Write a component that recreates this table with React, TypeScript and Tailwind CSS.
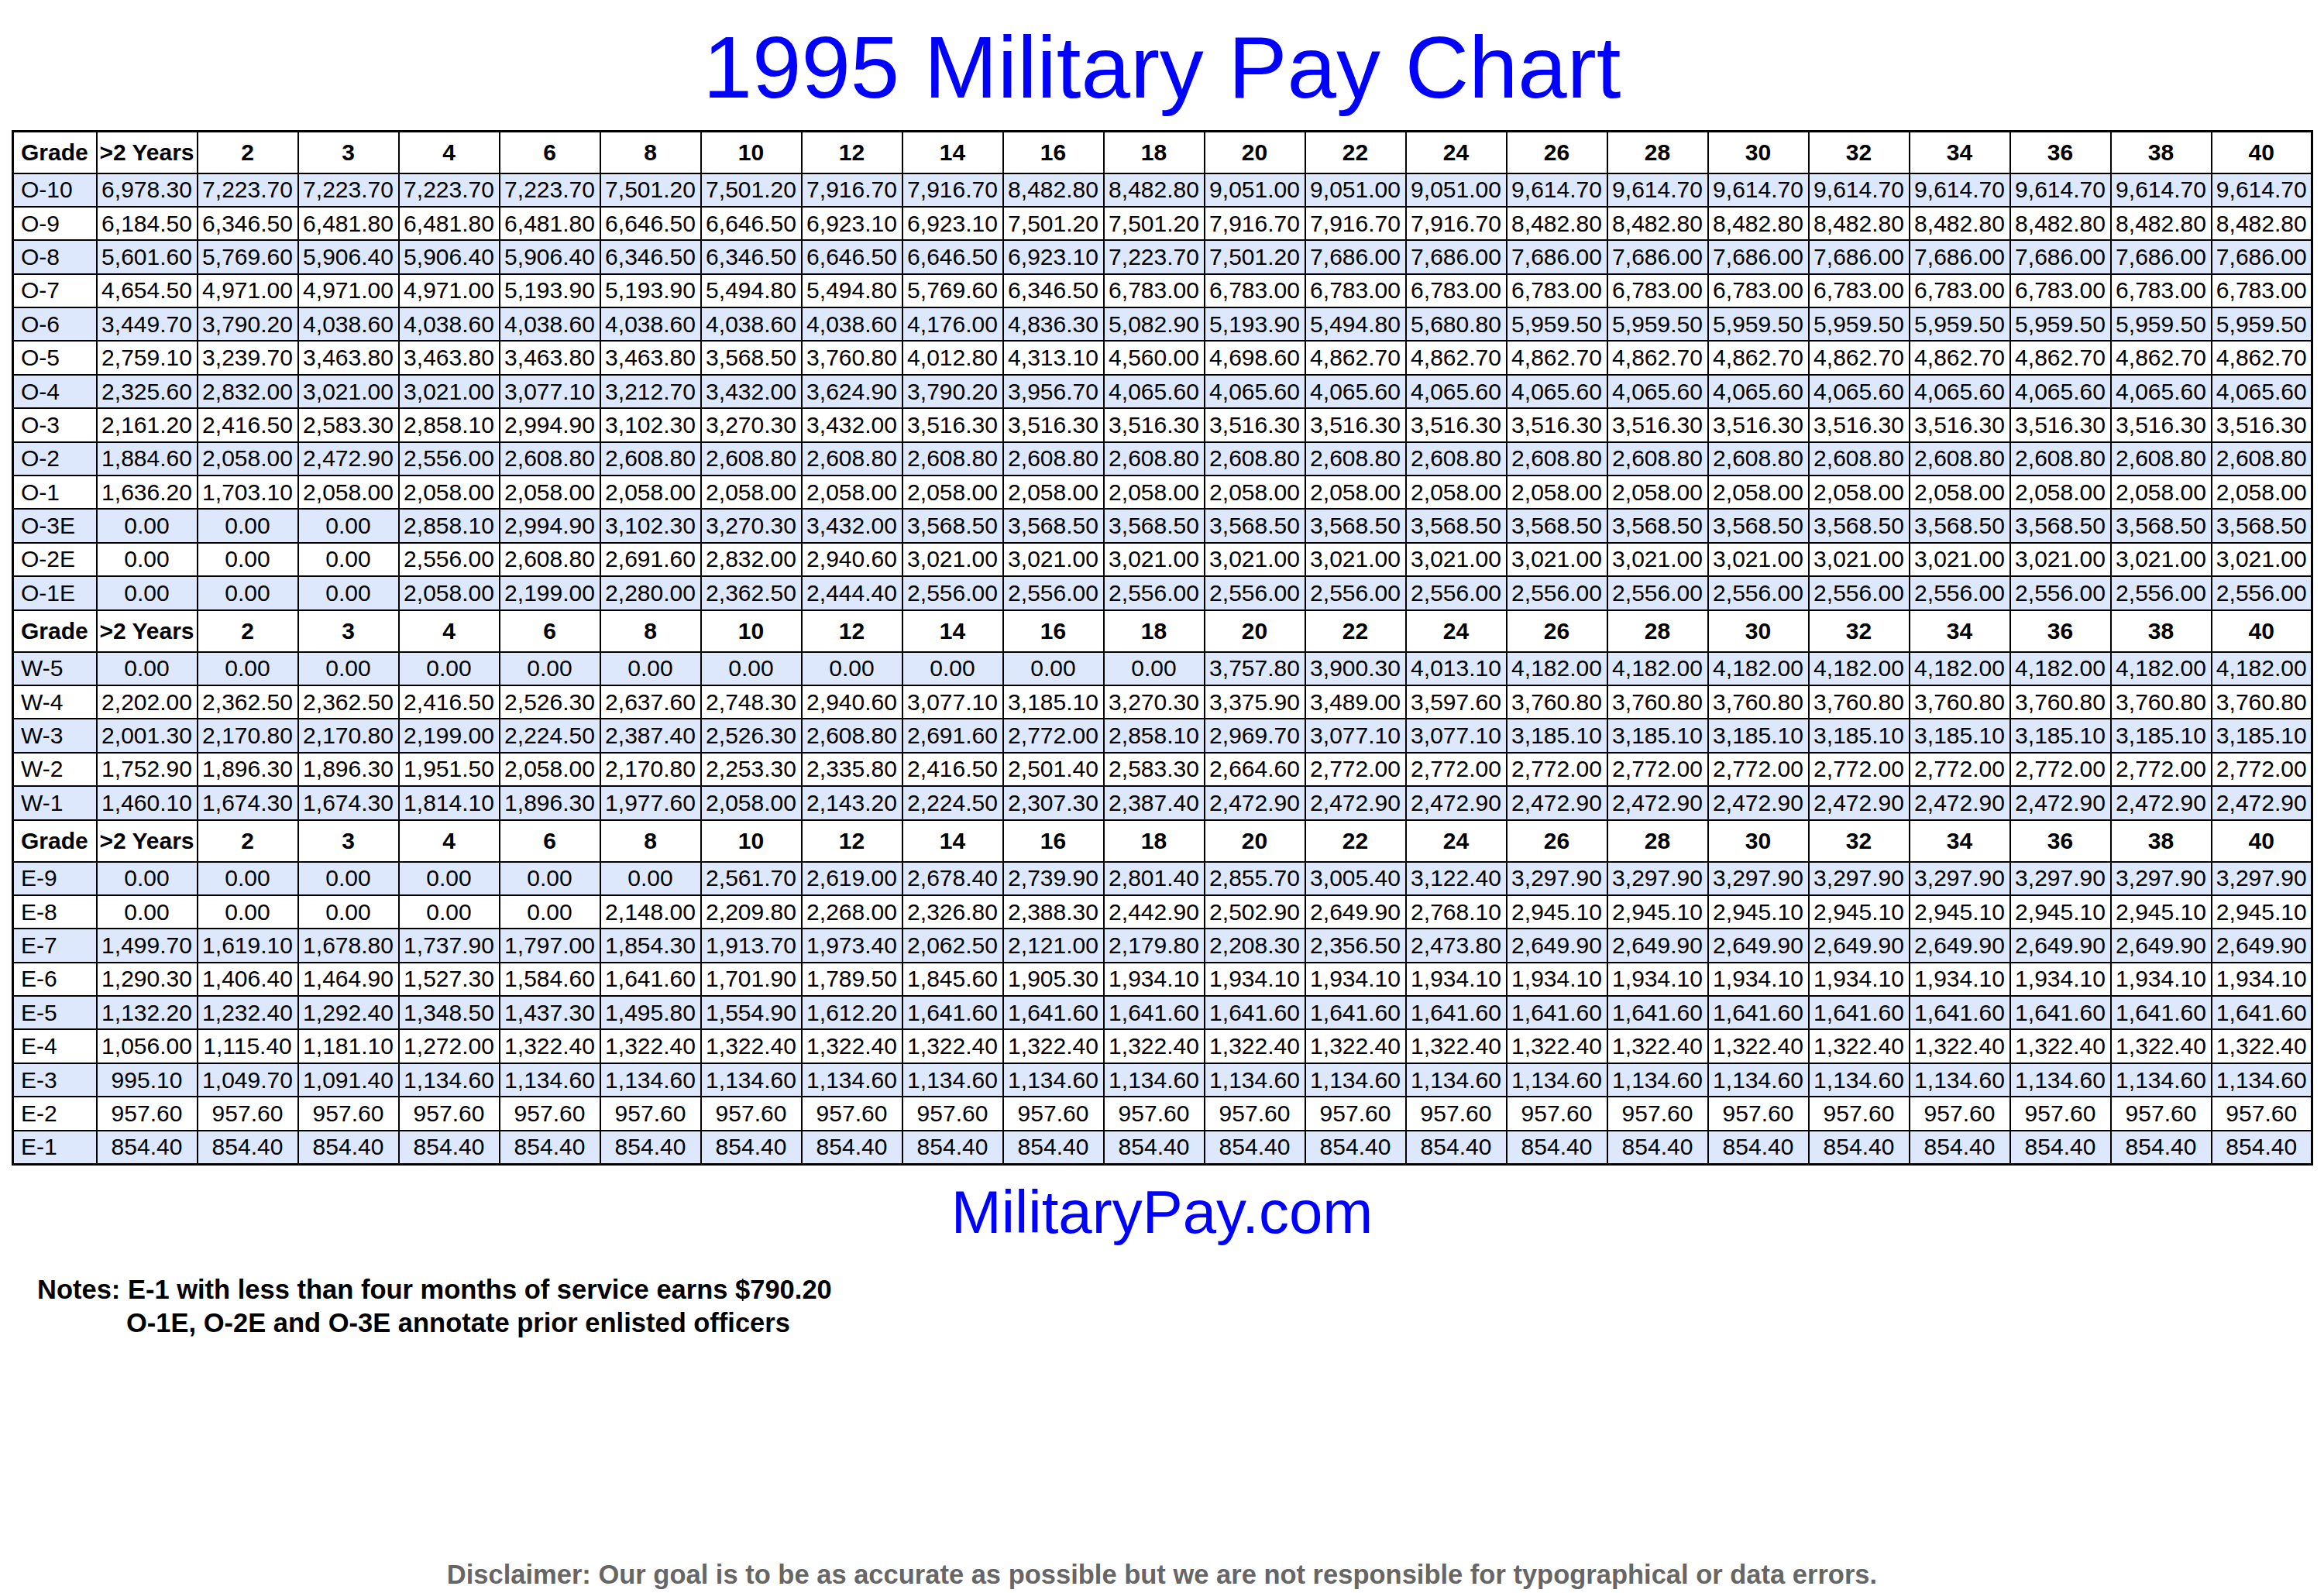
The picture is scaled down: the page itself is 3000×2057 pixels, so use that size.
import React from "react";

const YEARS = ["2", "3", "4", "6", "8", "10", "12", "14", "16", "18", "20", "22", "24", "26", "28", "30", "32", "34", "36", "38", "40"];

// every row holds 22 values; the last listed value carries on to year 40
const fill = (vals: string[]) => {
  const out = [...vals];
  while (out.length < 22) out.push(vals[vals.length - 1]);
  return out;
};
const zeros = (n: number) => Array(n).fill("0.00");

type Row = { grade: string; pay: string[] };

const officers: Row[] = [
  { grade: "O-10", pay: fill(["6,978.30", "7,223.70", "7,223.70", "7,223.70", "7,223.70", "7,501.20", "7,501.20", "7,916.70", "7,916.70", "8,482.80", "8,482.80", "9,051.00", "9,051.00", "9,051.00", "9,614.70"]) },
  { grade: "O-9", pay: fill(["6,184.50", "6,346.50", "6,481.80", "6,481.80", "6,481.80", "6,646.50", "6,646.50", "6,923.10", "6,923.10", "7,501.20", "7,501.20", "7,916.70", "7,916.70", "7,916.70", "8,482.80"]) },
  { grade: "O-8", pay: fill(["5,601.60", "5,769.60", "5,906.40", "5,906.40", "5,906.40", "6,346.50", "6,346.50", "6,646.50", "6,646.50", "6,923.10", "7,223.70", "7,501.20", "7,686.00"]) },
  { grade: "O-7", pay: fill(["4,654.50", "4,971.00", "4,971.00", "4,971.00", "5,193.90", "5,193.90", "5,494.80", "5,494.80", "5,769.60", "6,346.50", "6,783.00"]) },
  { grade: "O-6", pay: fill(["3,449.70", "3,790.20", "4,038.60", "4,038.60", "4,038.60", "4,038.60", "4,038.60", "4,038.60", "4,176.00", "4,836.30", "5,082.90", "5,193.90", "5,494.80", "5,680.80", "5,959.50"]) },
  { grade: "O-5", pay: fill(["2,759.10", "3,239.70", "3,463.80", "3,463.80", "3,463.80", "3,463.80", "3,568.50", "3,760.80", "4,012.80", "4,313.10", "4,560.00", "4,698.60", "4,862.70"]) },
  { grade: "O-4", pay: fill(["2,325.60", "2,832.00", "3,021.00", "3,021.00", "3,077.10", "3,212.70", "3,432.00", "3,624.90", "3,790.20", "3,956.70", "4,065.60"]) },
  { grade: "O-3", pay: fill(["2,161.20", "2,416.50", "2,583.30", "2,858.10", "2,994.90", "3,102.30", "3,270.30", "3,432.00", "3,516.30"]) },
  { grade: "O-2", pay: fill(["1,884.60", "2,058.00", "2,472.90", "2,556.00", "2,608.80"]) },
  { grade: "O-1", pay: fill(["1,636.20", "1,703.10", "2,058.00"]) },
  { grade: "O-3E", pay: fill([...zeros(3), "2,858.10", "2,994.90", "3,102.30", "3,270.30", "3,432.00", "3,568.50"]) },
  { grade: "O-2E", pay: fill([...zeros(3), "2,556.00", "2,608.80", "2,691.60", "2,832.00", "2,940.60", "3,021.00"]) },
  { grade: "O-1E", pay: fill([...zeros(3), "2,058.00", "2,199.00", "2,280.00", "2,362.50", "2,444.40", "2,556.00"]) },
];

const warrants: Row[] = [
  { grade: "W-5", pay: fill([...zeros(11), "3,757.80", "3,900.30", "4,013.10", "4,182.00"]) },
  { grade: "W-4", pay: fill(["2,202.00", "2,362.50", "2,362.50", "2,416.50", "2,526.30", "2,637.60", "2,748.30", "2,940.60", "3,077.10", "3,185.10", "3,270.30", "3,375.90", "3,489.00", "3,597.60", "3,760.80"]) },
  { grade: "W-3", pay: fill(["2,001.30", "2,170.80", "2,170.80", "2,199.00", "2,224.50", "2,387.40", "2,526.30", "2,608.80", "2,691.60", "2,772.00", "2,858.10", "2,969.70", "3,077.10", "3,077.10", "3,185.10"]) },
  { grade: "W-2", pay: fill(["1,752.90", "1,896.30", "1,896.30", "1,951.50", "2,058.00", "2,170.80", "2,253.30", "2,335.80", "2,416.50", "2,501.40", "2,583.30", "2,664.60", "2,772.00"]) },
  { grade: "W-1", pay: fill(["1,460.10", "1,674.30", "1,674.30", "1,814.10", "1,896.30", "1,977.60", "2,058.00", "2,143.20", "2,224.50", "2,307.30", "2,387.40", "2,472.90"]) },
];

const enlisted: Row[] = [
  { grade: "E-9", pay: fill([...zeros(6), "2,561.70", "2,619.00", "2,678.40", "2,739.90", "2,801.40", "2,855.70", "3,005.40", "3,122.40", "3,297.90"]) },
  { grade: "E-8", pay: fill([...zeros(5), "2,148.00", "2,209.80", "2,268.00", "2,326.80", "2,388.30", "2,442.90", "2,502.90", "2,649.90", "2,768.10", "2,945.10"]) },
  { grade: "E-7", pay: fill(["1,499.70", "1,619.10", "1,678.80", "1,737.90", "1,797.00", "1,854.30", "1,913.70", "1,973.40", "2,062.50", "2,121.00", "2,179.80", "2,208.30", "2,356.50", "2,473.80", "2,649.90"]) },
  { grade: "E-6", pay: fill(["1,290.30", "1,406.40", "1,464.90", "1,527.30", "1,584.60", "1,641.60", "1,701.90", "1,789.50", "1,845.60", "1,905.30", "1,934.10"]) },
  { grade: "E-5", pay: fill(["1,132.20", "1,232.40", "1,292.40", "1,348.50", "1,437.30", "1,495.80", "1,554.90", "1,612.20", "1,641.60"]) },
  { grade: "E-4", pay: fill(["1,056.00", "1,115.40", "1,181.10", "1,272.00", "1,322.40"]) },
  { grade: "E-3", pay: fill(["995.10", "1,049.70", "1,091.40", "1,134.60"]) },
  { grade: "E-2", pay: fill(["957.60"]) },
  { grade: "E-1", pay: fill(["854.40"]) },
];

const HeaderRow = () => (
  <tr className="h-[54px] bg-white">
    <th className="border-2 border-black pl-[9px] text-left font-bold">Grade</th>
    <th className="border-2 border-black px-0 text-center font-bold whitespace-nowrap">&gt;2 Years</th>
    {YEARS.map((y) => (
      <th key={y} className="border-2 border-black text-center font-bold">
        {y}
      </th>
    ))}
  </tr>
);

const Section = ({ rows }: { rows: Row[] }) => (
  <>
    <HeaderRow />
    {rows.map((r, i) => (
      <tr key={r.grade} className={i % 2 === 0 ? "h-[43.4px] bg-[#dde8fc]" : "h-[43.4px] bg-white"}>
        <td className="border-2 border-black pl-[9px] text-left">{r.grade}</td>
        {r.pay.map((v, j) => (
          <td key={j} className="border-2 border-black px-0 text-center whitespace-nowrap">
            {v}
          </td>
        ))}
      </tr>
    ))}
  </>
);

export default function App() {
  return (
    <div className="w-[3000px] h-[2057px] bg-white font-['Liberation_Sans',Arial,sans-serif] text-black">
      <h1 className="pt-[30px] text-center text-[114px] leading-[114px] text-[#0000ff]">1995 Military Pay Chart</h1>

      <table className="mt-[24px] ml-[15px] w-[2968px] table-fixed border-collapse border-[3px] border-black text-[30px] leading-none">
        <colgroup>
          <col className="w-[108px]" />
          {Array.from({ length: 22 }).map((_, i) => (
            <col key={i} className="w-[130px]" />
          ))}
        </colgroup>
        <tbody>
          <Section rows={officers} />
          <Section rows={warrants} />
          <Section rows={enlisted} />
        </tbody>
      </table>

      <div className="mt-[21px] text-center text-[78px] leading-[78px] text-[#0000ff]">MilitaryPay.com</div>

      <div className="mt-[40px] text-[34.5px] leading-[43px] font-bold">
        <div className="pl-[48px]">Notes: E-1 with less than four months of service earns $790.20</div>
        <div className="pl-[163px]">O-1E, O-2E and O-3E annotate prior enlisted officers</div>
      </div>

      <div className="mt-[286px] text-center text-[34.5px] leading-[34px] font-bold text-[#666666]">
        Disclaimer: Our goal is to be as accurate as possible but we are not responsible for typographical or data errors.
      </div>
    </div>
  );
}
